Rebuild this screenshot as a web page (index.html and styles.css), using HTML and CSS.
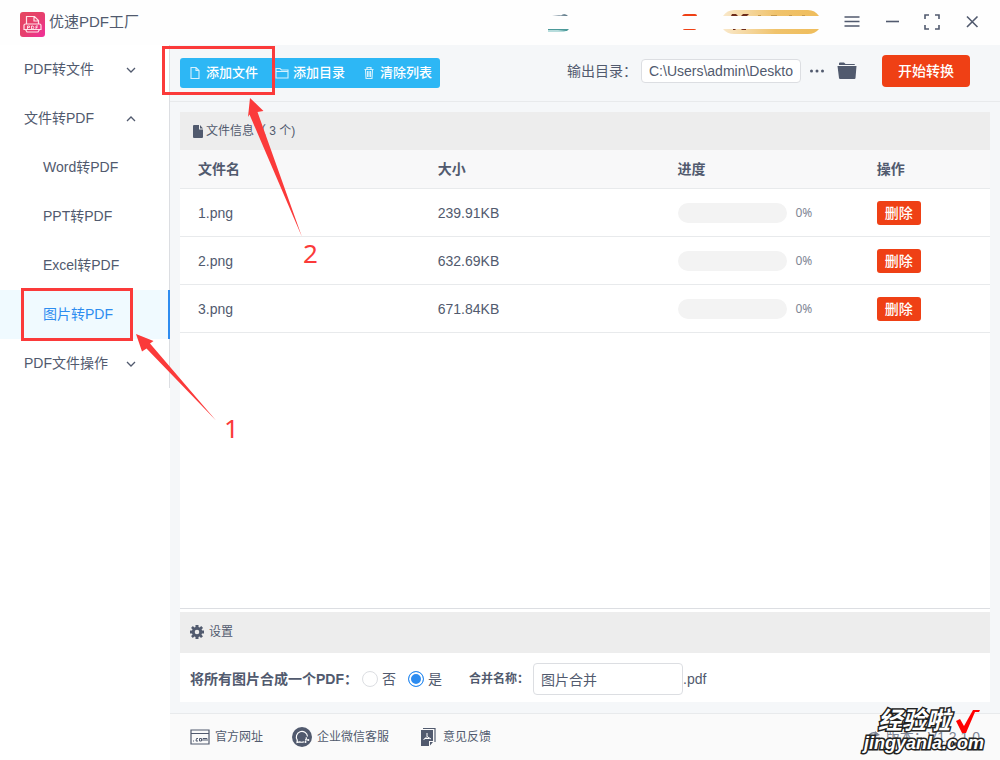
FILE: index.html
```html
<!DOCTYPE html>
<html lang="zh-CN">
<head>
<meta charset="utf-8">
<title>优速PDF工厂</title>
<link rel="stylesheet" href="styles.css">
</head>
<body>
<div class="app">
  <header class="titlebar">
    <div class="brand">
      <svg class="logo" viewBox="0 0 25 25" aria-hidden="true">
        <defs><linearGradient id="lg" x1="0" y1="0" x2="1" y2="1"><stop offset="0" stop-color="#e54860"/><stop offset=".5" stop-color="#e63f6c"/><stop offset="1" stop-color="#f02f9c"/></linearGradient></defs>
        <rect width="25" height="25" rx="3" fill="url(#lg)"/>
        <g fill="none" stroke="#ffe3e8" stroke-width="1.2"><path d="M6.500 12V4.500h8l4 4V12M14 5v4h4M5.500 12h14a1.500 1.500 0 0 1 1.500 1.500v4h-17v-4a1.500 1.500 0 0 1 1.500-1.500zM5.500 17.500l1.500 2.500h11l1.500-2.500"/></g>
        <path d="M7.500 17v-3h2v1.500h-2M11.500 14h1.500l.8 1.500-.8 1.500h-1.500zM16 17v-3h2M16 15.500h1.500" fill="none" stroke="#ffe3e8" stroke-width=".9"/>
      </svg>
      <h1>优速PDF工厂</h1>
    </div>
    <div class="window-tools">
      <svg class="remnants" viewBox="0 0 274 26" aria-hidden="true">
        <defs><linearGradient id="gold"><stop offset="0" stop-color="#f9e8ca"/><stop offset=".55" stop-color="#f0c36c"/><stop offset="1" stop-color="#efbd5c"/></linearGradient></defs>
        <path d="M5 6l7-1 9 1z" fill="#9aaab5"/><path d="M14 5.500q4-2.500 7 .5z" fill="#4d6b7c"/>
        <path d="M1 19h21l-2 2H1z" fill="#4b9999"/><path d="M1 20h10l8 1-2 1H1z" fill="#b7dcdc"/>
        <path d="M135 6q1-2 3-2h10q2 0 2 2zM136 19h13q0 1-2 1h-9q-2 0-2-1z" fill="#ef4015"/>
        <path d="M176 6q4-6 11-6h74q7 0 11 6z" fill="url(#gold)"/>
        <path d="M176 19h96q-4 5-11 5h-74q-7 0-11-5z" fill="url(#gold)"/>
        <path d="M184 6l1-2h4l2 2zM194 6l2-2h6l-2 2zM186 19h3l-1 1h-2zM194 19h5v1h-4z" fill="#6d2b1b"/>
        <path d="M211 5.500h3M224 5.500h6M242 5.500h3M255 5.500h3" stroke="#c89a4c" fill="none"/>
      </svg>
      <button class="icon-btn" aria-label="菜单"><svg viewBox="0 0 18 18"><path d="M1.500 4h15M1.500 8.500h15M1.500 13h15"/></svg></button>
      <button class="icon-btn" aria-label="最小化"><svg viewBox="0 0 18 18"><path d="M3 8.500h13"/></svg></button>
      <button class="icon-btn" aria-label="最大化"><svg viewBox="0 0 18 18"><path d="M2 6V2h4M12 2h4v4M16 12v4h-4M6 16H2v-4"/></svg></button>
      <button class="icon-btn" aria-label="关闭"><svg viewBox="0 0 18 18"><path d="M4 3.500l10.500 10.500M14.500 3.500L4 14"/></svg></button>
    </div>
  </header>

  <nav class="sidebar">
    <div class="menu">
      <button class="group">PDF转文件<svg viewBox="0 0 10 6"><path d="M1 1l4 4 4-4"/></svg></button>
      <button class="group">文件转PDF<svg viewBox="0 0 10 6"><path d="M1 5l4-4 4 4"/></svg></button>
      <a class="item" href="#word">Word转PDF</a>
      <a class="item" href="#ppt">PPT转PDF</a>
      <a class="item" href="#excel">Excel转PDF</a>
      <a class="item active" href="#image">图片转PDF</a>
      <button class="group">PDF文件操作<svg viewBox="0 0 10 6"><path d="M1 1l4 4 4-4"/></svg></button>
    </div>
  </nav>

  <main class="main">
    <div class="toolbar">
      <div class="actions">
        <button><svg viewBox="0 0 14 14"><path d="M3 1.500h5l3 3v8H3zM8 1.500v3h3"/></svg>添加文件</button>
        <button><svg viewBox="0 0 14 14"><path d="M1 2.500h4l1.500 1.500H13v8H1zM1 5.500h12"/></svg>添加目录</button>
        <button><svg viewBox="0 0 14 14"><path d="M2.500 3.500h9M5 3V1.500h4V3M3.500 4l.5 8.500h6l.5-8.500M5.500 5v6M7 5v6M8.500 5v6"/></svg>清除列表</button>
      </div>
      <div class="output">
        <label for="out">输出目录：</label>
        <input id="out" type="text" value="C:\Users\admin\Deskto">
        <button class="dots" aria-label="选择目录"><svg viewBox="0 0 16 6"><circle cx="2.500" cy="3" r="1.500"/><circle cx="8" cy="3" r="1.500"/><circle cx="13.500" cy="3" r="1.500"/></svg></button>
        <button class="folder" aria-label="打开目录"><svg viewBox="0 0 20 18"><path d="M2 3V1.500q0-1 1-1h4l1.500 1.500H17q1 0 1 1z"/><path d="M1 4h18.500l-1 12q-.1 1-1 1h-14.500q-.9 0-1-1L.5 4z"/></svg></button>
        <button class="start">开始转换</button>
      </div>
    </div>

    <section class="files">
      <h2 class="bar"><svg class="doc" viewBox="0 0 10 13"><path d="M1 0h5v4.500h4V12q0 1-1 1H1q-1 0-1-1V1q0-1 1-1zM7 0l3 3.500H7z"/></svg>文件信息（ 3 个)</h2>
      <table>
        <colgroup><col class="c-name"><col class="c-size"><col class="c-progress"><col></colgroup>
        <thead><tr><th>文件名</th><th>大小</th><th>进度</th><th>操作</th></tr></thead>
        <tbody>
          <tr><td>1.png</td><td>239.91KB</td><td><div class="progress"><span class="track"></span><span>0%</span></div></td><td><button class="del">删除</button></td></tr>
          <tr><td>2.png</td><td>632.69KB</td><td><div class="progress"><span class="track"></span><span>0%</span></div></td><td><button class="del">删除</button></td></tr>
          <tr><td>3.png</td><td>671.84KB</td><td><div class="progress"><span class="track"></span><span>0%</span></div></td><td><button class="del">删除</button></td></tr>
        </tbody>
      </table>
    </section>

    <section class="settings">
      <h2 class="bar"><svg class="gear" viewBox="0 0 14 14"><path fill-rule="evenodd" d="M5.500 0h3v2l1.200.5L11.200 1l1.900 1.900-1.500 1.400.5 1.200H14v3h-2l-.5 1.200 1.500 1.500-2 1.900-1.400-1.500-1.100.5V14h-3v-2l-1.200-.5-1.500 1.500L1 11.100l1.500-1.400L2 8.500H0v-3h2l.5-1.200L1 2.900 2.900 1l1.400 1.500L5.500 2zM7 4.700a2.300 2.300 0 1 0 0 4.600 2.300 2.300 0 0 0 0-4.600z"/></svg>设置</h2>
      <div class="options">
        <span class="caption" id="merge">将所有图片合成一个PDF：</span>
        <div class="radios" role="radiogroup" aria-labelledby="merge">
          <label><input type="radio" name="merge">否</label>
          <label><input type="radio" name="merge" checked>是</label>
        </div>
        <label class="name-label" for="name">合并名称：</label>
        <input id="name" type="text" value="图片合并"><span>.pdf</span>
      </div>
    </section>

    <footer class="footer">
      <a href="#site"><svg viewBox="0 0 20 20"><path d="M1 3h18v14H1zM1 6.500h18" fill="none" stroke="currentColor" stroke-width="1.200"/><path d="M3 14h1M8 11.500H6.500L6 14h2M9.500 11.500h2V14h-2zM13 14v-2.500h4V14M15 12v2" fill="none" stroke="currentColor"/></svg>官方网址</a>
      <a href="#wechat"><svg viewBox="0 0 20 20"><circle cx="10" cy="10" r="10" fill="currentColor"/><path d="M12 14.700q-2 1-4.500.2L5 15.500l.3-2.300a5.600 5.600 0 1 1 10.200-3.700" fill="none" stroke="#fff" stroke-width="1.200"/><path d="M14.500 11l-1 3.500M13 12.500l3 .5" stroke="#fff" stroke-width=".8"/><circle cx="13.500" cy="15" r="1" fill="#fff"/><circle cx="16.300" cy="13" r="1" fill="#fff"/><circle cx="14.300" cy="11" r=".8" fill="#fff"/></svg>企业微信客服</a>
      <a href="#feedback"><svg viewBox="0 0 20 20"><path d="M5 1.500h12V15" fill="none" stroke="currentColor" stroke-width="1.200"/><path d="M3 3h12v11h-4V19H3zM12 15h3l-3 3.500z" fill="currentColor"/><path d="M9 6v3.500L5.500 13M9 9.500l4 2.500M6.500 11.500h5" stroke="#fff" fill="none"/></svg>意见反馈</a>
      <span class="version"><svg viewBox="0 0 14 14"><path d="M1 11a6 6 0 0 1 9-7" fill="none" stroke="currentColor" stroke-width="1.500"/><path d="M8 1l5 4-6 2z" fill="currentColor"/></svg>版本：V1.2.1.0</span>
    </footer>
  </main>

  <div class="box box-menu"></div>
  <div class="box box-add"></div>
  <svg class="arrows" viewBox="0 0 170 330" aria-hidden="true">
    <path d="M0 239L17.500 246 14 248.500 80 325.500 10.500 253.500 6 256.500z"/>
    <path d="M114 3L127.500 16 121.500 17 166 142 113.500 19.500 112 22z"/>
  </svg>
  <span class="step step-1">1</span>
  <span class="step step-2">2</span>
  <div class="stamp">
    <div class="stamp-top">经验啦<svg viewBox="0 0 24 24"><path d="M0 12l4-2 4 7L17 1h7l-1 2h-4L10 24H6z" fill="#f00"/></svg></div>
    <div class="stamp-site">jingyanla.com</div>
  </div>
</div>
</body>
</html>
```
FILE: styles.css
```css
* { box-sizing: border-box; }
body {
  margin: 0;
  color: #515a6e;
  background: #fff;
  font: 14px/20px "Liberation Sans", "Noto Sans CJK SC", sans-serif;
}
button, input { font: inherit; color: inherit; margin: 0; }
button { border: 0; padding: 0; background: none; cursor: pointer; }
a { color: inherit; text-decoration: none; }
svg { display: block; flex: none; }
h1, h2 { margin: 0; font-weight: 400; }

.app {
  position: relative;
  min-height: 100vh;
  display: grid;
  grid-template-columns: 170px 1fr;
  grid-template-rows: 45px 1fr;
}

.titlebar {
  grid-column: 1 / -1;
  display: flex;
  justify-content: space-between;
  align-items: center;
  padding: 0 19px 0 20px;
  background: #fefefe;
}
.brand { display: flex; align-items: center; gap: 4px; padding-top: 3px; }
.brand h1 { font-size: 15px; line-height: 22px; padding-bottom: 4px; }
.logo { width: 25px; height: 25px; }
.window-tools { display: flex; align-items: center; gap: 22px; padding-bottom: 1px; }
.remnants { width: 274px; height: 26px; margin-top: 2px; }
.icon-btn svg { width: 18px; height: 18px; fill: none; stroke: #515a6e; stroke-width: 1.6; }

.menu { border-right: 1px solid #dcdee2; }
.group, .item { display: flex; align-items: center; width: 100%; height: 49px; padding-bottom: 2px; }
.group { justify-content: space-between; padding-left: 24px; padding-right: 33px; }
.group svg { width: 10px; height: 6px; margin-top: 2px; fill: none; stroke: #515a6e; stroke-width: 1.3; }
.item { padding-left: 43px; }
.item.active {
  width: 170px;
  color: #2d8cf0;
  background: #f0faff;
  border-right: 2px solid #2d8cf0;
}

.main { display: flex; flex-direction: column; min-width: 0; background: #f5f7f9; }
.toolbar {
  display: flex;
  justify-content: space-between;
  align-items: center;
  height: 57px;
  padding: 0 30px 4px 10px;
  border-bottom: 1px solid #e8eaec;
}
.actions {
  display: flex;
  align-items: center;
  gap: 17px;
  height: 30px;
  padding: 0 8px;
  margin-top: 3px;
  border-radius: 3px;
  background: #2db7f5;
  color: #fff;
}
.actions button { display: flex; align-items: center; gap: 4px; font-size: 13px; font-weight: 500; }
.actions svg { width: 14px; height: 14px; fill: none; stroke: #d5f1fd; stroke-width: 1.1; }
.output { display: flex; align-items: center; }
.output label { margin-right: 4px; }
input[type="text"] { border: 1px solid #dcdee2; border-radius: 4px; background: #fff; outline: 0; }
#out { width: 160px; height: 24px; padding: 0 7px; }
.dots { margin-left: 8px; }
.dots svg { width: 16px; height: 6px; fill: #515a6e; }
.folder { margin-left: 12px; }
.folder svg { width: 20px; height: 18px; fill: #515a6e; }
.start { width: 88px; height: 32px; margin-left: 25px; border-radius: 4px; background: #ef4015; color: #fff; font-weight: 500; }

.files { flex: 1; margin: 10px 10px 0; padding-bottom: 3px; background: #fff; border-bottom: 1px solid #dcdee2; }
.bar { display: flex; align-items: center; background: #ededed; font-size: 12px; }
.files .bar { height: 38px; padding-left: 13px; gap: 3px; }
.doc { width: 10px; height: 13px; fill: #515a6e; }
table { width: 100%; border-collapse: separate; border-spacing: 0; table-layout: fixed; }
.c-name, .c-size { width: 29.6%; }
.c-progress { width: 24.6%; }
th, td { padding: 0 18px; text-align: left; border-bottom: 1px solid #e8eaec; }
th { height: 39px; background: #f8f8f9; font-weight: 700; }
td { height: 48px; }
.progress { display: flex; align-items: center; gap: 9px; font: 12px/20px "Noto Sans", sans-serif; color: #808695; }
.track { width: 109px; height: 20px; border-radius: 10px; background: #f3f3f3; }
.del { display: block; width: 44px; height: 24px; border-radius: 3px; background: #ef4015; color: #fff; font-weight: 500; }

.settings { margin: 0 10px 11px; padding-top: 3px; background: #fff; }
.settings .bar { height: 41px; padding: 0 10px 2px; gap: 5px; }
.gear { width: 14px; height: 14px; fill: #515a6e; }
.options { display: flex; align-items: center; height: 49px; padding: 2px 10px 0; }
.caption { font-weight: 700; }
.radios { display: flex; gap: 12px; margin-left: 4px; }
.radios label { display: flex; align-items: center; gap: 4px; }
.radios input {
  appearance: none;
  width: 16px;
  height: 16px;
  border: 1px solid #dcdee2;
  border-radius: 50%;
  background: #fff;
}
.radios input:checked { border-color: #2d8cf0; background: #2d8cf0; box-shadow: inset 0 0 0 2px #fff; }
.name-label { margin-left: 27px; margin-right: 4px; font-size: 12px; font-weight: 700; }
#name { width: 150px; height: 32px; padding: 0 7px; }

.footer {
  display: flex;
  align-items: center;
  gap: 29px;
  height: 47px;
  padding: 0 20px;
  border-top: 1px solid #e8eaec;
  background: #fafafa;
  font-size: 12px;
}
.footer a, .version { display: flex; align-items: center; gap: 5px; }
.footer a svg { width: 20px; height: 20px; }
.version { margin-left: auto; color: #808695; font-size: 14px; }
.version svg { width: 14px; height: 14px; }

/* Tutorial annotations drawn over the window */
.box { position: absolute; border: 3px solid #fb3a3a; pointer-events: none; }
.box-menu { left: 21px; top: 288px; width: 112px; height: 53px; }
.box-add { left: 162px; top: 46px; width: 113px; height: 49px; }
.arrows { position: absolute; left: 136px; top: 95px; width: 170px; height: 330px; fill: #fb3a3a; pointer-events: none; }
.step { position: absolute; color: #fb3a3a; font: 26px/30px "Noto Sans", sans-serif; }
.step-1 { left: 224px; top: 413px; }
.step-2 { left: 303px; top: 238px; }
.stamp {
  position: absolute;
  right: 16px;
  bottom: 7px;
  color: #fff;
  font-weight: 700;
  font-style: italic;
  -webkit-text-stroke: 3px #222;
  paint-order: stroke fill;
  pointer-events: none;
}
.stamp-top { display: flex; align-items: center; gap: 6px; padding-left: 14px; font-size: 24px; line-height: 24px; }
.stamp-top svg { width: 24px; height: 24px; }
.stamp-site { font-size: 18px; line-height: 20px; }
```
